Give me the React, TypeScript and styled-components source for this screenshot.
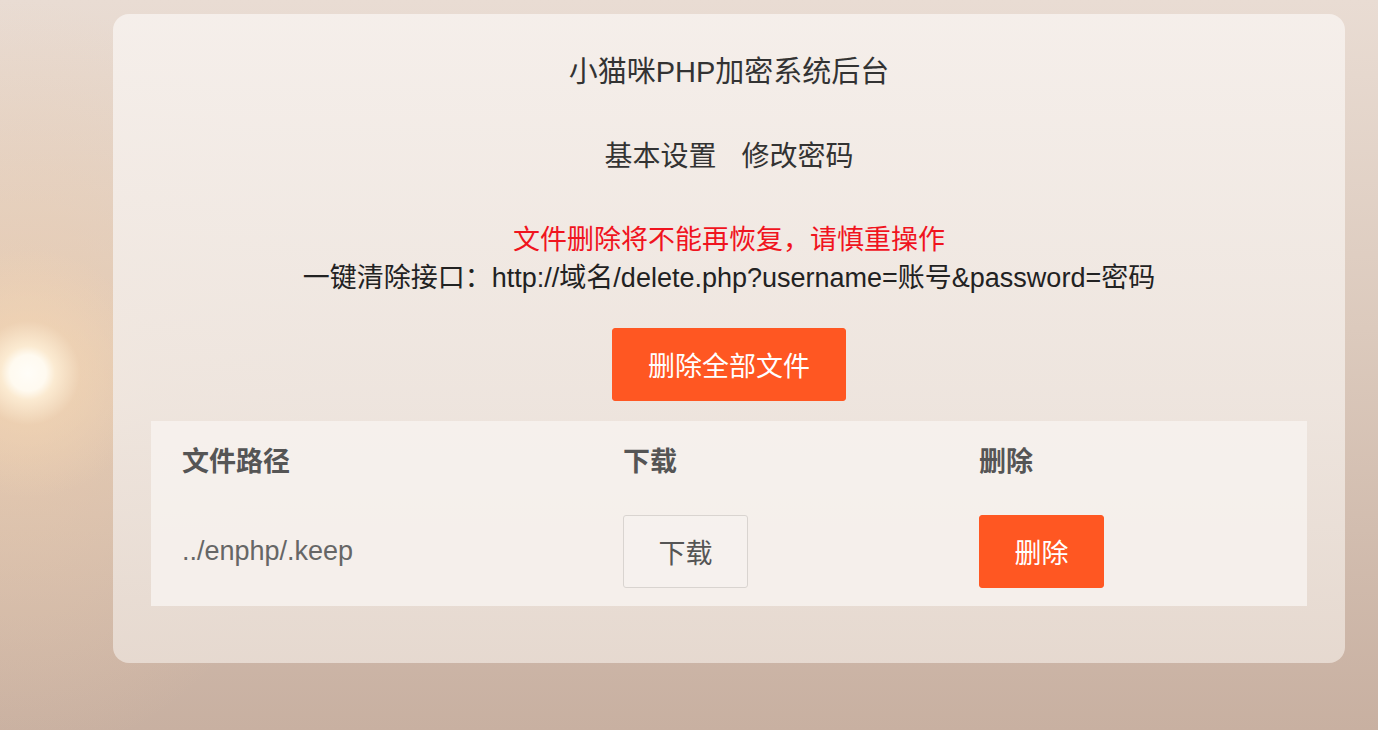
import styled, { createGlobalStyle } from 'styled-components';

const GlobalStyle = createGlobalStyle`
  html, body {
    margin: 0;
    padding: 0;
    height: 100%;
  }
  body {
    font-family: "Liberation Sans", "Noto Sans CJK SC", sans-serif;
    background:
      radial-gradient(circle at 28px 373px, #fffdf8 0, #fffaf0 18px, rgba(255, 240, 215, 0.85) 27px, rgba(245, 215, 180, 0.5) 52px, rgba(240, 210, 180, 0) 125px),
      radial-gradient(ellipse 300px 380px at 20px 380px, rgba(240, 205, 170, 0.6), rgba(240, 205, 170, 0)),
      linear-gradient(180deg, #e9dcd3 0%, #dccabd 45%, #c8b0a1 100%);
    background-attachment: fixed;
  }
`;

const Page = styled.main`
  min-height: 730px;
  box-sizing: border-box;
  padding: 14px 33px 0 113px;
`;

const Card = styled.section`
  width: 1232px;
  height: 649px;
  box-sizing: border-box;
  padding: 38px 38px 0;
  border-radius: 16px;
  background: linear-gradient(180deg, rgba(246, 240, 236, 0.93) 0%, rgba(240, 232, 226, 0.9) 60%, rgba(232, 220, 211, 0.92) 100%);
  display: flex;
  flex-direction: column;
  align-items: center;
  color: #333;
`;

const Title = styled.h1`
  margin: 0;
  font-size: 29px;
  font-weight: 400;
  line-height: 40px;
  color: #333;
`;

const Nav = styled.nav`
  margin-top: 45px;
  display: flex;
  gap: 25px;
`;

const NavLink = styled.a`
  font-size: 28px;
  line-height: 40px;
  color: #333;
  text-decoration: none;
`;

const Notice = styled.div`
  margin-top: 44px;
  text-align: center;
  font-size: 27px;
  line-height: 38px;
`;

const Warning = styled.div`
  color: #f0141e;
`;

const Api = styled.div`
  color: #222;
`;

const Button = styled.button<{ $variant?: 'danger' | 'plain' }>`
  appearance: none;
  box-sizing: border-box;
  height: 73px;
  border-radius: 3px;
  font-family: inherit;
  font-size: 27px;
  cursor: pointer;
  border: 1px solid ${(p) => (p.$variant === 'plain' ? '#d9d4d0' : '#ff5722')};
  background: ${(p) => (p.$variant === 'plain' ? 'rgba(255, 255, 255, 0.15)' : '#ff5722')};
  color: ${(p) => (p.$variant === 'plain' ? '#555' : '#fff')};
`;

const DeleteAll = styled(Button)`
  margin-top: 31px;
  width: 234px;
`;

const RowButton = styled(Button)`
  width: 125px;
`;

const Table = styled.div`
  margin-top: 20px;
  width: 1156px;
  background: rgba(247, 242, 239, 0.85);
  display: grid;
  grid-template-columns: 441px 356px 1fr;
`;

const HeadCell = styled.div`
  height: 76px;
  padding: 0 31px;
  display: flex;
  align-items: center;
  font-size: 27px;
  font-weight: 700;
  color: #555;
`;

const Cell = styled.div`
  height: 109px;
  padding: 0 31px;
  display: flex;
  align-items: center;
  font-size: 27px;
  color: #666;
`;

const files = ['../enphp/.keep'];

export default function App() {
  return (
    <>
      <GlobalStyle />
      <Page>
        <Card>
          <Title>小猫咪PHP加密系统后台</Title>
          <Nav>
            <NavLink href="#">基本设置</NavLink>
            <NavLink href="#">修改密码</NavLink>
          </Nav>
          <Notice>
            <Warning>文件删除将不能再恢复，请慎重操作</Warning>
            <Api>一键清除接口：http://域名/delete.php?username=账号&amp;password=密码</Api>
          </Notice>
          <DeleteAll>删除全部文件</DeleteAll>
          <Table>
            <HeadCell>文件路径</HeadCell>
            <HeadCell>下载</HeadCell>
            <HeadCell>删除</HeadCell>
            {files.map((f) => (
              <>
                <Cell key={f + 'p'}>{f}</Cell>
                <Cell key={f + 'd'}>
                  <RowButton $variant="plain">下载</RowButton>
                </Cell>
                <Cell key={f + 'x'}>
                  <RowButton>删除</RowButton>
                </Cell>
              </>
            ))}
          </Table>
        </Card>
      </Page>
    </>
  );
}
